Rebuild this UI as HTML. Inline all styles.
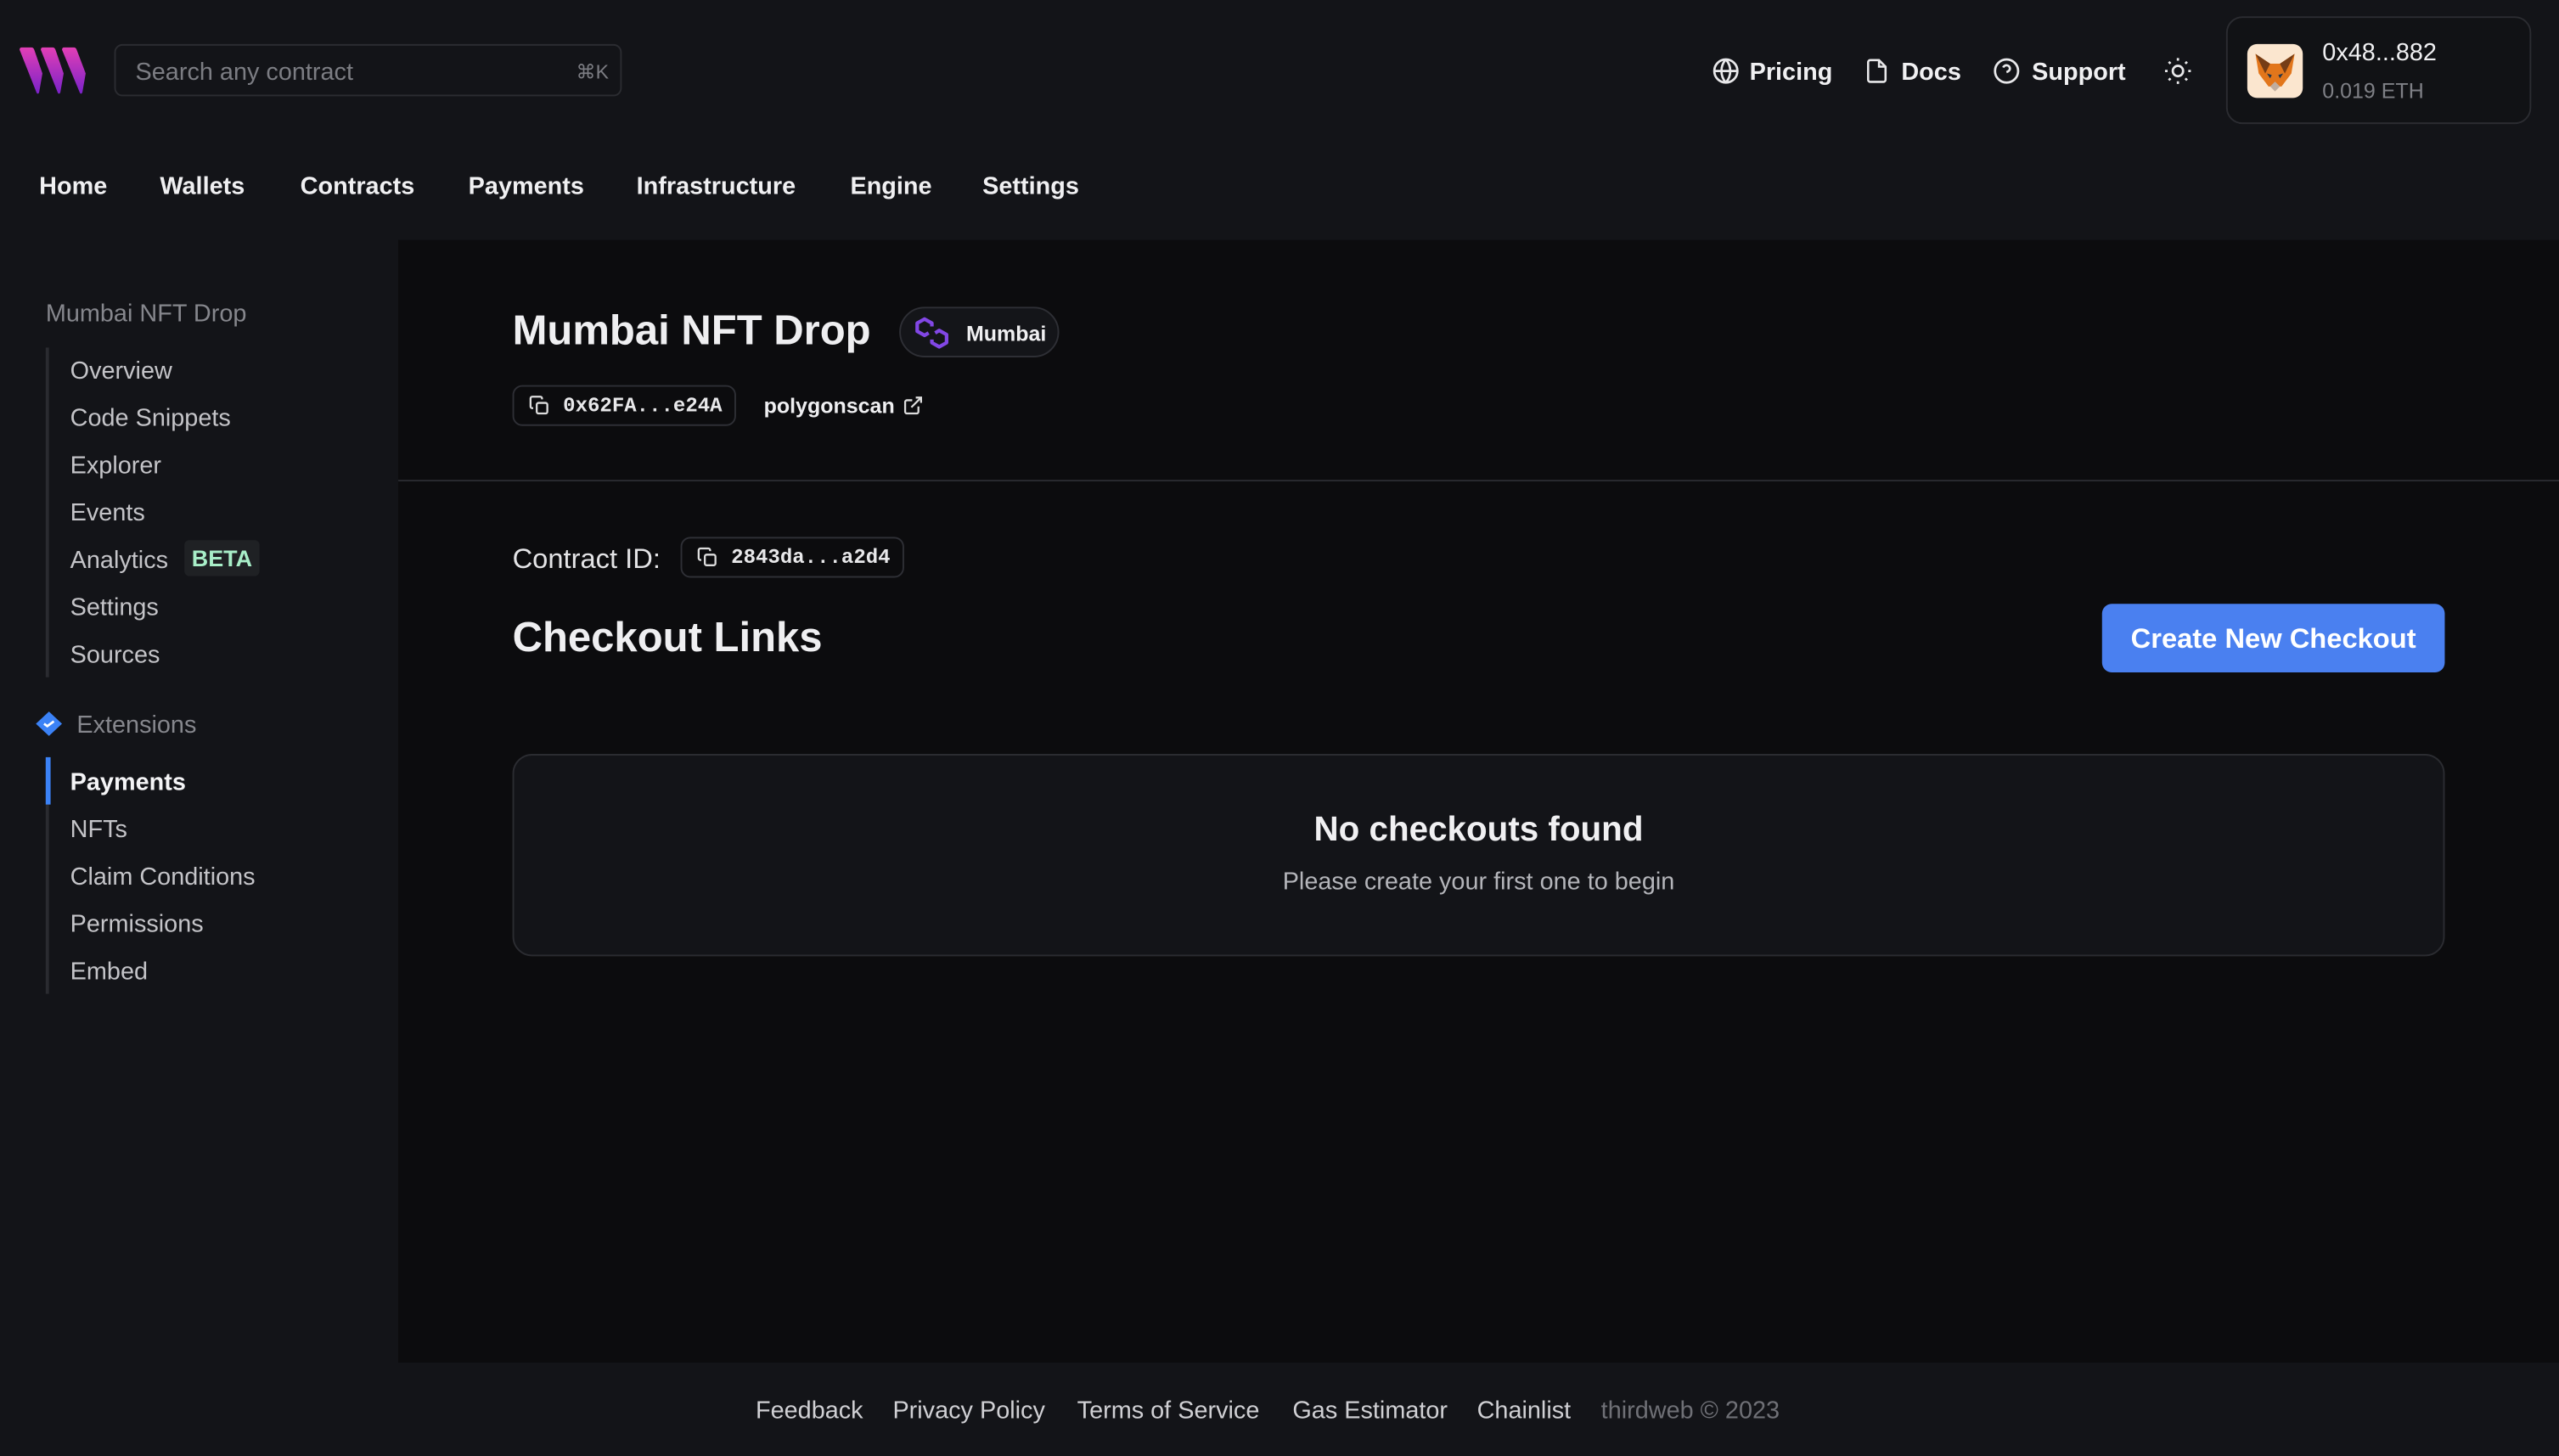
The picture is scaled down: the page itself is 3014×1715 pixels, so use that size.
<!DOCTYPE html>
<html><head><meta charset="utf-8"><style>
*{margin:0;padding:0;box-sizing:border-box}
html,body{width:3014px;height:1715px;overflow:hidden;background:#131418}
#w{position:absolute;left:0;top:0;width:1568px;height:892px;transform:scale(1.9222);transform-origin:0 0;font-family:"Liberation Sans",sans-serif;color:#e8e8ea;background:#131418}
.a{position:absolute;white-space:nowrap}
.nav{font-size:15px;font-weight:bold;top:105.5px;color:#f0f0f2}
.sb{font-size:15px;color:#c4c4c8;left:43px}
.ft{font-size:15px;color:#d0d0d4;top:855.5px}
.chip{position:absolute;border:1px solid #2e2f35;border-radius:6px;font-family:"Liberation Mono",monospace;font-weight:bold;font-size:12.5px;color:#e8e8ea;display:flex;align-items:center}
</style></head><body><div id="w">
<svg class="a" style="left:11px;top:29px" width="43" height="29" viewBox="0 0 43 29"><defs><linearGradient id="g" x1="0" y1="0" x2="0" y2="1"><stop offset="0" stop-color="#e23fb5"/><stop offset="1" stop-color="#7a22c9"/></linearGradient></defs><path d="M1 1.5 Q1 0 2.5 0 H8 Q9.5 0 10 1.5 L15 16 L13 27.5 Q12.5 29 11.5 28 Z" fill="url(#g)"/><path d="M14 1.5 Q14 0 15.5 0 H21 Q22.5 0 23 1.5 L28 16 L26 27.5 Q25.5 29 24.5 28 Z" fill="url(#g)"/><path d="M27 1.5 Q27 0 28.5 0 H34 Q35.5 0 36 1.5 L41.5 16 L39.5 27.5 Q39 29 38 28 Z" fill="url(#g)"/></svg>
<div class="a" style="left:70px;top:27px;width:311px;height:32px;border:1px solid #2b2c31;border-radius:5px"></div>
<div class="a" style="left:83px;top:35.5px;font-size:15px;color:#7c7d83">Search any contract</div>
<div class="a" style="left:353px;top:37px;font-size:12px;color:#7c7d83">⌘K</div>
<div class="a nav" style="left:24px">Home</div>
<div class="a nav" style="left:98px">Wallets</div>
<div class="a nav" style="left:184px">Contracts</div>
<div class="a nav" style="left:287px">Payments</div>
<div class="a nav" style="left:390px">Infrastructure</div>
<div class="a nav" style="left:521px">Engine</div>
<div class="a nav" style="left:602px">Settings</div>
<svg class="a" style="left:1049px;top:35px" width="17" height="17" viewBox="0 0 24 24" fill="none" stroke="#e8e8ea" stroke-width="2"><circle cx="12" cy="12" r="10"/><path d="M2 12h20M12 2a15 15 0 0 1 0 20M12 2a15 15 0 0 0 0 20"/></svg>
<div class="a nav" style="left:1072px;top:35.5px">Pricing</div>
<svg class="a" style="left:1142px;top:35px" width="16" height="17" viewBox="0 0 24 24" fill="none" stroke="#e8e8ea" stroke-width="2"><path d="M14 2H6a2 2 0 0 0-2 2v16a2 2 0 0 0 2 2h12a2 2 0 0 0 2-2V8z"/><path d="M14 2v6h6"/></svg>
<div class="a nav" style="left:1165px;top:35.5px">Docs</div>
<svg class="a" style="left:1221px;top:35px" width="17" height="17" viewBox="0 0 24 24" fill="none" stroke="#e8e8ea" stroke-width="2"><circle cx="12" cy="12" r="10"/><path d="M9.1 9a3 3 0 0 1 5.8 1c0 2-3 3-3 3M12 17h.01"/></svg>
<div class="a nav" style="left:1245px;top:35.5px">Support</div>
<svg class="a" style="left:1325px;top:34px" width="19" height="19" viewBox="0 0 24 24" fill="none" stroke="#e8e8ea" stroke-width="1.8"><circle cx="12" cy="12" r="4"/><path d="M12 2v2M12 20v2M4.9 4.9l1.4 1.4M17.7 17.7l1.4 1.4M2 12h2M20 12h2M6.3 17.7l-1.4 1.4M19.1 4.9l-1.4 1.4"/></svg>
<div class="a" style="left:1364px;top:10px;width:187px;height:66px;border:1px solid #2b2c31;border-radius:10px;background:#111215"></div>
<div class="a" style="left:1377px;top:27px;width:34px;height:33px;background:#fbe6cf;border-radius:6px"></div>
<svg class="a" style="left:1380px;top:31px" width="28" height="26" viewBox="0 0 28 26"><path d="M2 2 L11 8 H17 L26 2 L24 14 L18 22 H10 L4 14 Z" fill="#e2761b"/><path d="M2 2 L11 8 L8 14 Z M26 2 L17 8 L20 14 Z" fill="#763d16"/><path d="M11 22 L14 19 L17 22 L14 25 Z" fill="#c0ad9e"/><path d="M9 14 L12 15 L11 17 Z M19 14 L16 15 L17 17Z" fill="#233447"/></svg>
<div class="a" style="left:1423px;top:24px;font-size:15px;color:#f0f0f2">0x48...882</div>
<div class="a" style="left:1423px;top:47.5px;font-size:13px;color:#7f8086">0.019 ETH</div>
<div class="a" style="left:244px;top:147px;width:1324px;height:688px;background:#0c0c0e"></div>
<div class="a" style="left:244px;top:294px;width:1324px;height:1px;background:#2a2b30"></div>
<div class="a" style="left:28px;top:183.5px;font-size:15px;color:#86878d">Mumbai NFT Drop</div>
<div class="a" style="left:28px;top:213px;width:2px;height:202px;background:#2a2b30"></div>
<div class="a sb" style="top:218.5px">Overview</div>
<div class="a sb" style="top:247.5px">Code Snippets</div>
<div class="a sb" style="top:276.5px">Explorer</div>
<div class="a sb" style="top:305.5px">Events</div>
<div class="a sb" style="top:334.5px">Analytics</div>
<div class="a" style="left:113px;top:331px;width:46px;height:22px;background:#1f2124;border-radius:3px;color:#a8eec8;font-weight:bold;font-size:14px;text-align:center;line-height:22px">BETA</div>
<div class="a sb" style="top:363.5px">Settings</div>
<div class="a sb" style="top:392.5px">Sources</div>
<svg class="a" style="left:22px;top:436px" width="16" height="15" viewBox="0 0 16 15"><path d="M8 0 L16 7.5 L8 15 L0 7.5Z" fill="#3b82f6"/><path d="M5 7.5 L7 9 L11 6" stroke="#fff" stroke-width="1.4" fill="none"/></svg>
<div class="a" style="left:47px;top:435.5px;font-size:15px;color:#86878d">Extensions</div>
<div class="a" style="left:28px;top:464px;width:2px;height:145px;background:#2a2b30"></div>
<div class="a" style="left:28px;top:464px;width:3px;height:29px;background:#3b82f6"></div>
<div class="a sb" style="top:470.5px;font-weight:bold;color:#f4f4f6">Payments</div>
<div class="a sb" style="top:499.5px">NFTs</div>
<div class="a sb" style="top:528.5px">Claim Conditions</div>
<div class="a sb" style="top:557.5px">Permissions</div>
<div class="a sb" style="top:586.5px">Embed</div>
<div class="a" style="left:314px;top:189px;font-size:25.5px;font-weight:bold;color:#efeff1">Mumbai NFT Drop</div>
<div class="a" style="left:551px;top:188px;width:98px;height:31px;border:1px solid #2e2f35;border-radius:16px;background:#141519"></div>
<svg class="a" style="left:560px;top:194px" width="22" height="20" viewBox="0 0 22 20" fill="none" stroke="#8247e5" stroke-width="2.2" stroke-linejoin="round"><path d="M11 6 V4 L6.5 1.5 L2 4 V9 L6.5 11.5 L9 10"/><path d="M11 14 V16 L15.5 18.5 L20 16 V11 L15.5 8.5 L13 10"/></svg>
<div class="a" style="left:592px;top:196.5px;font-size:13px;font-weight:bold;color:#efeff1">Mumbai</div>
<div class="chip" style="left:314px;top:236px;width:137px;height:25px;padding-left:9px">
<svg width="13" height="13" viewBox="0 0 24 24" fill="none" stroke="#ddd" stroke-width="2.2"><rect x="9" y="9" width="12" height="12" rx="2"/><path d="M5 15H4a2 2 0 0 1-2-2V4a2 2 0 0 1 2-2h9a2 2 0 0 1 2 2v1"/></svg><span style="margin-left:8px">0x62FA...e24A</span></div>
<div class="a" style="left:468px;top:241px;font-size:13px;font-weight:bold;color:#efeff1">polygonscan</div>
<svg class="a" style="left:553px;top:242px" width="13" height="13" viewBox="0 0 24 24" fill="none" stroke="#ddd" stroke-width="2.2"><path d="M18 13v6a2 2 0 0 1-2 2H5a2 2 0 0 1-2-2V8a2 2 0 0 1 2-2h6M15 3h6v6M10 14L21 3"/></svg>
<div class="a" style="left:314px;top:332.5px;font-size:17px;color:#e4e4e6">Contract ID:</div>
<div class="chip" style="left:417px;top:329px;width:137px;height:25px;padding-left:9px">
<svg width="13" height="13" viewBox="0 0 24 24" fill="none" stroke="#ddd" stroke-width="2.2"><rect x="9" y="9" width="12" height="12" rx="2"/><path d="M5 15H4a2 2 0 0 1-2-2V4a2 2 0 0 1 2-2h9a2 2 0 0 1 2 2v1"/></svg><span style="margin-left:8px">2843da...a2d4</span></div>
<div class="a" style="left:314px;top:376.5px;font-size:25.5px;font-weight:bold;color:#efeff1">Checkout Links</div>
<div class="a" style="left:1288px;top:370px;width:210px;height:42px;background:#4a80f0;border-radius:6px;color:#fff;font-size:17px;font-weight:bold;text-align:center;line-height:43px">Create New Checkout</div>
<div class="a" style="left:314px;top:462px;width:1184px;height:124px;border:1px solid #2b2c31;border-radius:12px;background:#131418"></div>
<div class="a" style="left:314px;top:496.5px;width:1184px;text-align:center;font-size:21px;font-weight:bold;color:#f0f0f2">No checkouts found</div>
<div class="a" style="left:314px;top:531.5px;width:1184px;text-align:center;font-size:15px;color:#b4b5ba">Please create your first one to begin</div>
<div class="a ft" style="left:463px">Feedback</div>
<div class="a ft" style="left:547px">Privacy Policy</div>
<div class="a ft" style="left:660px">Terms of Service</div>
<div class="a ft" style="left:792px">Gas Estimator</div>
<div class="a ft" style="left:905px">Chainlist</div>
<div class="a ft" style="left:981px;color:#6f7076">thirdweb © 2023</div>
</div></body></html>
